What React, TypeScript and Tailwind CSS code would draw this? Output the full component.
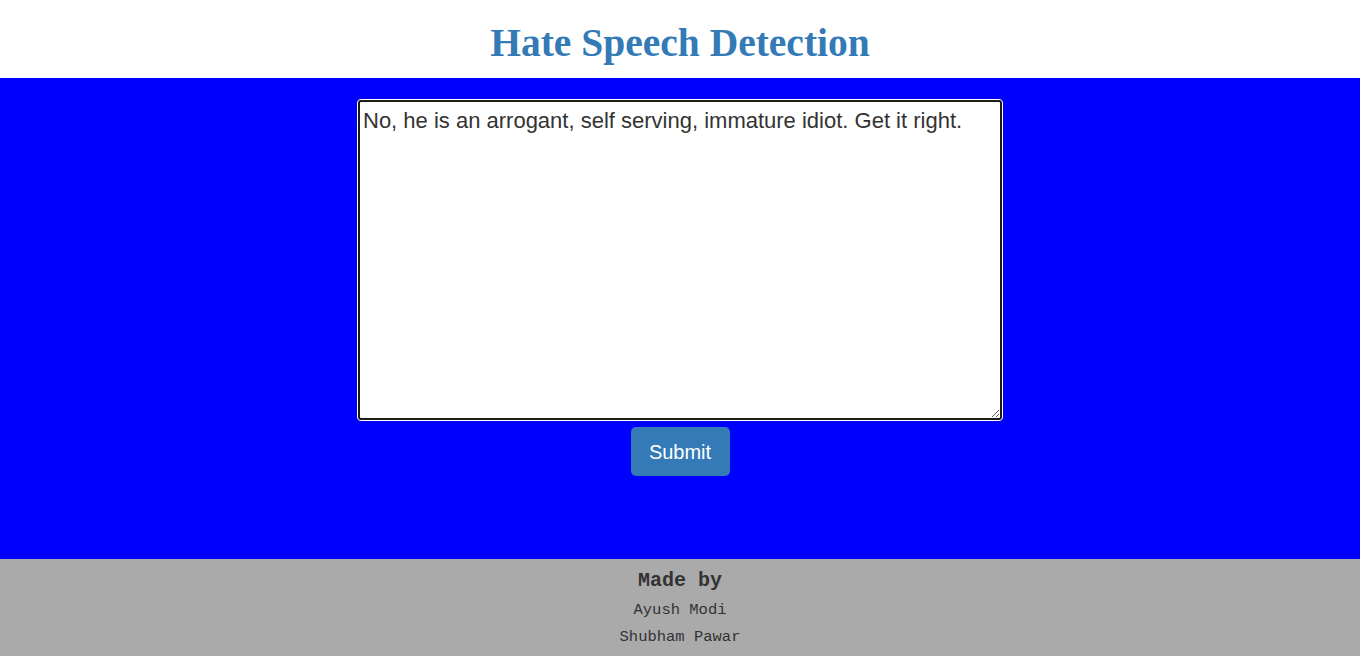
export default function App() {
  return (
    <div className="w-full min-h-screen flex flex-col bg-white">
      {/* Header */}
      <header className="h-[78px] flex items-center justify-center">
        <h1 className="font-['Liberation_Serif','Times_New_Roman',serif] font-bold text-[39.5px] leading-none text-[#337ab7] pt-[10px]">
          Hate Speech Detection
        </h1>
      </header>

      {/* Main */}
      <main className="h-[481px] bg-[#0000ff] flex flex-col items-center pt-[21px]">
        <div className="rounded-[4px] border border-white bg-white">
          <textarea
            defaultValue="No, he is an arrogant, self serving, immature idiot. Get it right."
            className="block w-[644px] h-[320px] border-2 border-[#1c1c1c] rounded-[3px] bg-white px-[3px] pt-[6px] pb-[4px] font-['Liberation_Sans',Arial,sans-serif] text-[22px] leading-[26px] text-[#333333] outline-none resize"
          />
        </div>
        <button className="mt-[6px] w-[99px] h-[49px] rounded-[5px] bg-[#337ab7] text-white font-['Liberation_Sans',Arial,sans-serif] text-[20px]">
          Submit
        </button>
      </main>

      {/* Footer */}
      <footer className="h-[97px] bg-[#aaaaaa] flex flex-col items-center pt-[9px] font-['Liberation_Mono','Courier_New',monospace] text-[#333333]">
        <p className="text-[20px] font-bold leading-[26px]">Made by</p>
        <p className="text-[15.5px] leading-[27px] mt-[3px]">Ayush Modi</p>
        <p className="text-[15.5px] leading-[27px]">Shubham Pawar</p>
      </footer>
    </div>
  );
}
